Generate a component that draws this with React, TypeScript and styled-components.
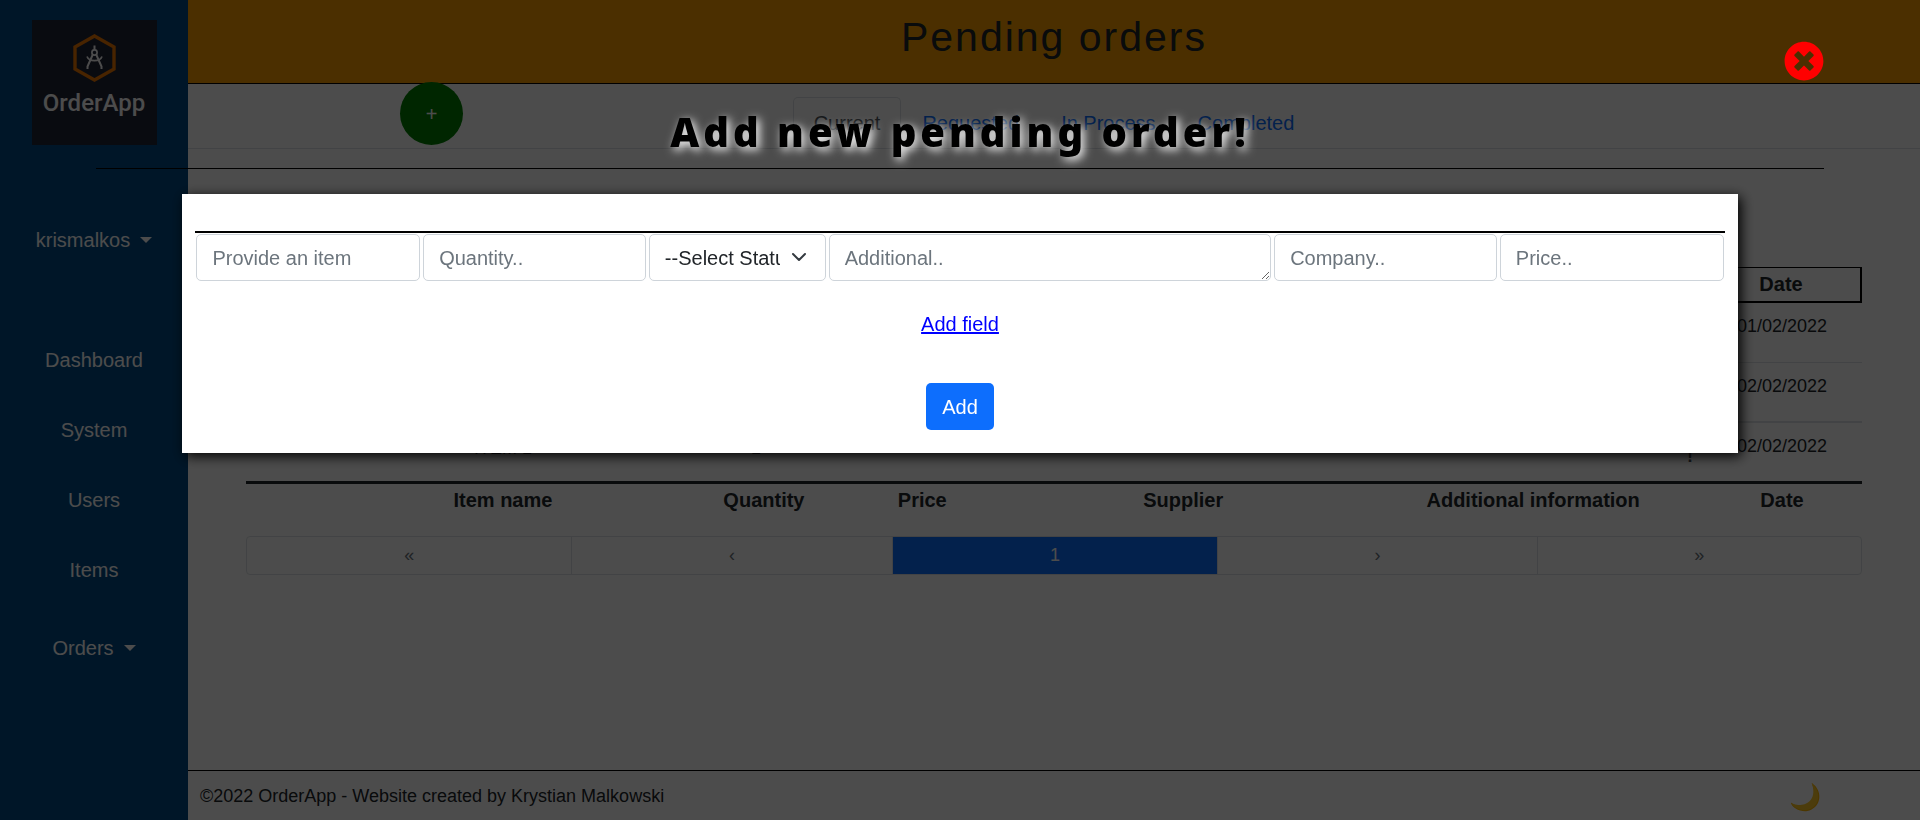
import React from "react";
import styled, { createGlobalStyle, css } from "styled-components";
import { FaTimesCircle } from "react-icons/fa";

const GlobalStyle = createGlobalStyle`
  *, *::before, *::after { box-sizing: border-box; }
  body {
    margin: 0;
    background: #fff;
    color: #212529;
    font-family: "Liberation Sans", Arial, sans-serif;
    font-size: 20px;
    line-height: 30px;
  }
  a { text-decoration: none; }
  ul { list-style: none; margin: 0; padding: 0; }
  button, input, select, textarea { font: inherit; }
`;

const Shell = styled.div`
  display: grid;
  grid-template-columns: 188px minmax(0, 1fr);
  min-height: 100vh;
`;

/* ---------- sidebar ---------- */

const Sidebar = styled.aside`
  display: flex;
  flex-direction: column;
  align-items: center;
  padding-top: 20px;
  background: #004a85;
  color: #fff;
`;

const Logo = styled.a`
  display: flex;
  flex-direction: column;
  align-items: center;
  width: 125px;
  height: 125px;
  padding-top: 13px;
  background: #212537;
  color: #fff;
  font-family: "Roboto", sans-serif;
  font-size: 24px;
  font-weight: 500;
  line-height: 40px;
`;

const menuText = css`
  border: 0;
  background: none;
  color: #fff;
  font-size: 20px;
  line-height: 30px;
`;

const DropdownToggle = styled.button`
  ${menuText}
  display: flex;
  align-items: center;
  gap: 10px;
  padding: 8px 0;

  &::after {
    content: "";
    border-top: 6px solid;
    border-left: 6px solid transparent;
    border-right: 6px solid transparent;
  }
`;

const UserArea = styled.div`
  margin: 72px 0 62px;
`;

const NavItem = styled.li`
  display: flex;
  justify-content: center;
  padding: 20px 0;
`;

const NavLink = styled.a`
  ${menuText}
`;

/* ---------- main column ---------- */

const Main = styled.main`
  display: flex;
  flex-direction: column;
  min-width: 0;
`;

const PageHeader = styled.header`
  padding: 13px 0 22px;
  border-bottom: 1px solid #000;
  background: #fb9f00;
  text-align: center;
`;

const PageTitle = styled.h1`
  margin: 0;
  font-size: 41px;
  font-weight: 400;
  line-height: 48px;
  letter-spacing: 2px;
`;

const TabBar = styled.nav`
  position: relative;
  padding-top: 13px;
  border-bottom: 1px solid #dee2e6;
`;

const TabList = styled.ul`
  display: flex;
  justify-content: center;
`;

const Tab = styled.a<{ $active?: boolean }>`
  display: block;
  padding: 10px 20px;
  border: 1px solid ${(p) => (p.$active ? "#dee2e6" : "transparent")};
  border-bottom: 0;
  border-radius: 5px 5px 0 0;
  color: ${(p) => (p.$active ? "#495057" : "#0d6efd")};
`;

const AddOrderButton = styled.button`
  position: absolute;
  top: -2px;
  left: 212px;
  width: 63px;
  height: 63px;
  padding: 0;
  border: 0;
  border-radius: 50%;
  background: green;
  color: #fff;
`;

const Content = styled.section`
  flex: 1;
  padding: 118px 58px 0;
`;

const OrdersTable = styled.table`
  width: 100%;
  table-layout: fixed;
  border-collapse: separate;
  border-spacing: 0;
  text-align: center;

  th {
    padding: 1px 0 2px;
  }
  thead th {
    border-top: 1px solid #000;
    border-bottom: 2px solid #000;
  }
  thead th:first-child {
    border-left: 2px solid #000;
  }
  thead th:last-child {
    border-right: 2px solid #000;
  }
  tbody td {
    height: 60px;
    padding: 10px 0 0;
    border-bottom: 1px solid #dee2e6;
    font-size: 18px;
    line-height: 27px;
    vertical-align: top;
  }
  tbody tr:nth-child(2) td {
    border-bottom-width: 2px;
  }
  tbody tr:last-child td {
    height: 61px;
    border-bottom: 3px solid #212529;
  }
`;

const Col = styled.col<{ $share: number }>`
  width: ${(p) => p.$share}%;
`;

const ValueCell = styled.td<{ $spinner?: boolean }>`
  && {
    padding-top: 12px;
    padding-right: ${(p) => (p.$spinner ? 16 : 0)}px;
  }
`;

const NoteCell = styled.td`
  && {
    padding: 20px 9px 0 0;
    color: #495057;
    font-weight: 700;
    text-align: right;
  }
`;

const Pagination = styled.ul`
  display: grid;
  grid-template-columns: 325fr 321fr 326fr 320fr 325fr;
  margin-top: 19px;
  border: 1px solid #dee2e6;
  border-radius: 4px;
  font-size: 18px;

  li + li {
    border-left: 1px solid #dee2e6;
  }
`;

const PageButton = styled.button<{ $current?: boolean }>`
  display: block;
  width: 100%;
  padding: 0;
  border: 0;
  background: ${(p) => (p.$current ? "#0d6efd" : "transparent")};
  color: ${(p) => (p.$current ? "#fff" : "#6c757d")};
  line-height: 37px;
`;

const PageFooter = styled.footer`
  display: flex;
  justify-content: space-between;
  padding: 12px 99px 10px 12px;
  border-top: 1px solid #000;
  font-size: 18px;
  line-height: 27px;
`;

const ThemeButton = styled.button`
  height: 27px;
  padding: 0;
  border: 0;
  background: none;
  && {
    font-size: 26px;
    line-height: 24px;
  }
`;

/* ---------- overlay dialog ---------- */

const Overlay = styled.div`
  position: fixed;
  inset: 0;
  background: rgba(0, 0, 0, 0.7);
`;

const OverlayBody = styled.div`
  position: relative;
  width: 90%;
  margin: 0 auto;
  padding-top: 108px;
`;

const OverlayTitle = styled.h2`
  margin: 0;
  padding-bottom: 12px;
  border-bottom: 1px solid #000;
  color: #000;
  font-family: "Arial Black", "Noto Sans", sans-serif;
  font-size: 40px;
  font-weight: 900;
  line-height: 48px;
  letter-spacing: 4px;
  text-align: center;
  text-shadow: 3px 3px 10px #fff;
`;

const CloseButton = styled.button`
  position: absolute;
  top: 41px;
  right: 0;
  display: flex;
  padding: 0;
  border: 0;
  background: none;
  color: red;
  font-size: 40px;
`;

const Dialog = styled.form`
  display: flex;
  flex-direction: column;
  align-items: center;
  width: 90%;
  margin: 25px auto 0;
  padding: 37px 13px 23px;
  background: #fff;
  box-shadow: 3px 3px 12px #000;
`;

const FieldRow = styled.div`
  display: grid;
  grid-template-columns: 224fr 223fr 177fr 443fr 223fr 224fr;
  gap: 3px;
  width: 100%;
  padding: 1px 1px 0;
  border-top: 2px solid #000;
`;

const fieldBox = css`
  display: block;
  width: 100%;
  min-width: 0;
  height: 47px;
  padding: 9px 15px 7px;
  border: 1px solid #ced4da;
  border-radius: 5px;
  background: #fff;
  color: #212529;
  line-height: 29px;

  &::placeholder {
    color: #6c757d;
    opacity: 1;
  }
`;

const TextField = styled.input`
  ${fieldBox}
`;

const NotesField = styled.textarea`
  ${fieldBox}
`;

const SelectWrap = styled.div`
  position: relative;

  svg {
    position: absolute;
    top: 15px;
    right: 19px;
    pointer-events: none;
  }
`;

const StatusSelect = styled.select`
  ${fieldBox}
  padding-right: 45px;
  appearance: none;
  text-overflow: clip;
`;

const AddFieldLink = styled.a`
  margin: 28px 0 44px;
  color: #00f;
  text-decoration: underline;
`;

const SubmitButton = styled.button`
  height: 47px;
  padding: 0 16px;
  border: 0;
  border-radius: 5px;
  background: #0d6efd;
  color: #fff;
`;

const LogoMark = () => (
  <svg width="45" height="50" viewBox="0 0 45 50" fill="none" aria-hidden="true">
    <path d="M22.5 3 42 14v22L22.5 47 3 36V14z" stroke="#f07800" strokeWidth="3.4" />
    <g stroke="#fff" strokeWidth="1.7">
      <path d="M22.5 12.5V17" strokeWidth="2" />
      <circle cx="22.5" cy="19.5" r="2.6" />
      <path d="M20.8 21.5 15.5 33.5v2.500M24.2 21.5 29.5 33.5v2.500" strokeWidth="2" />
      <path d="M15 23.500c2 5.500 13 5.500 15 0" />
    </g>
  </svg>
);

const columns = ["", "Item name", "Quantity", "Price", "Supplier", "Additional information", "Date"];
const shares = [4.6, 22.6, 9.7, 9.9, 22.4, 20.9, 9.9];

const orders = [
  { name: "ITEM 3", quantity: 1, date: "01/02/2022" },
  { name: "ITEM 2", quantity: 1, date: "02/02/2022" },
  { name: "ITEM 1", quantity: 1, date: "02/02/2022" },
];

export default function App() {
  return (
    <>
      <GlobalStyle />
      <Shell>
        <Sidebar>
          <Logo href="#">
            <LogoMark />
            OrderApp
          </Logo>
          <UserArea>
            <DropdownToggle type="button">krismalkos</DropdownToggle>
          </UserArea>
          <nav>
            <ul>
              {["Dashboard", "System", "Users", "Items"].map((label) => (
                <NavItem key={label}>
                  <NavLink href="#">{label}</NavLink>
                </NavItem>
              ))}
              <NavItem>
                <DropdownToggle type="button">Orders</DropdownToggle>
              </NavItem>
            </ul>
          </nav>
        </Sidebar>

        <Main>
          <PageHeader>
            <PageTitle>Pending orders</PageTitle>
          </PageHeader>
          <TabBar>
            <AddOrderButton type="button">+</AddOrderButton>
            <TabList>
              {["Current", "Requested", "In Process", "Completed"].map((label, i) => (
                <li key={label}>
                  <Tab href="#" $active={i === 0}>
                    {label}
                  </Tab>
                </li>
              ))}
            </TabList>
          </TabBar>

          <Content>
            <OrdersTable>
              <colgroup>
                {shares.map((share, i) => (
                  <Col key={i} $share={share} />
                ))}
              </colgroup>
              <thead>
                <tr>
                  {columns.map((label) => (
                    <th key={label}>{label}</th>
                  ))}
                </tr>
              </thead>
              <tbody>
                {orders.map((order) => (
                  <tr key={order.name}>
                    <td />
                    <ValueCell>{order.name}</ValueCell>
                    <ValueCell $spinner>{order.quantity}</ValueCell>
                    <td />
                    <td />
                    <NoteCell>!</NoteCell>
                    <td>{order.date}</td>
                  </tr>
                ))}
              </tbody>
              <tfoot>
                <tr>
                  {columns.map((label) => (
                    <th key={label}>{label}</th>
                  ))}
                </tr>
              </tfoot>
            </OrdersTable>
            <Pagination>
              {["«", "‹", "1", "›", "»"].map((label) => (
                <li key={label}>
                  <PageButton type="button" $current={label === "1"}>
                    {label}
                  </PageButton>
                </li>
              ))}
            </Pagination>
          </Content>

          <PageFooter>
            <span>©2022 OrderApp - Website created by Krystian Malkowski</span>
            <ThemeButton type="button" aria-label="Toggle theme">
              🌙
            </ThemeButton>
          </PageFooter>
        </Main>
      </Shell>

      <Overlay>
        <OverlayBody>
          <CloseButton type="button" aria-label="Close">
            <FaTimesCircle />
          </CloseButton>
          <OverlayTitle>Add new pending order!</OverlayTitle>
          <Dialog>
            <FieldRow>
              <TextField aria-label="Item" placeholder="Provide an item" />
              <TextField aria-label="Quantity" placeholder="Quantity.." />
              <SelectWrap>
                <StatusSelect aria-label="Status">
                  <option>--Select Status--</option>
                </StatusSelect>
                <svg width="16" height="16" viewBox="0 0 16 16" fill="none" aria-hidden="true">
                  <path
                    d="m2 5 6 6 6-6"
                    stroke="#343a40"
                    strokeWidth="2"
                    strokeLinecap="round"
                    strokeLinejoin="round"
                  />
                </svg>
              </SelectWrap>
              <NotesField aria-label="Additional information" placeholder="Additional.." rows={1} />
              <TextField aria-label="Company" placeholder="Company.." />
              <TextField aria-label="Price" placeholder="Price.." />
            </FieldRow>
            <AddFieldLink href="#">Add field</AddFieldLink>
            <SubmitButton type="button">Add</SubmitButton>
          </Dialog>
        </OverlayBody>
      </Overlay>
    </>
  );
}
